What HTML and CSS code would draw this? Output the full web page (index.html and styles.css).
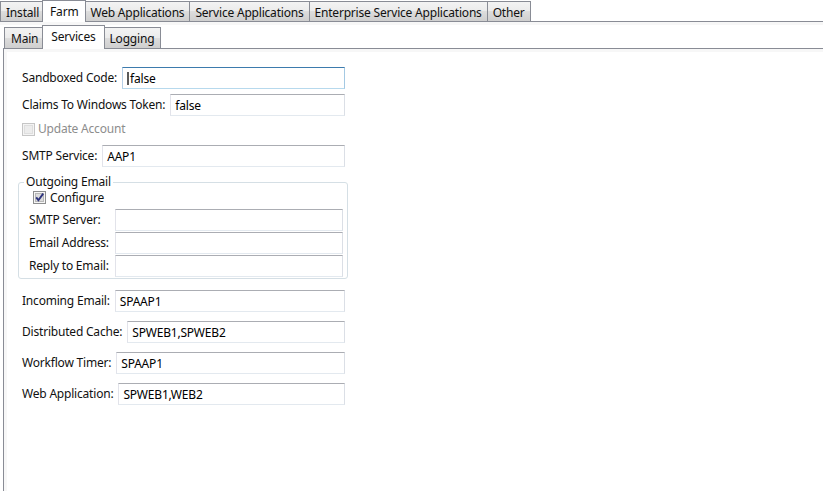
FILE: index.html
```html
<!DOCTYPE html>
<html>
<head>
<meta charset="utf-8">
<link rel="stylesheet" href="styles.css">
</head>
<body>
<div class="app">
  <div class="tabstrip outer-strip">
    <div class="tab first">Install</div>
    <div class="tab sel">Farm</div>
    <div class="tab">Web Applications</div>
    <div class="tab">Service Applications</div>
    <div class="tab">Enterprise Service Applications</div>
    <div class="tab">Other</div>
  </div>
  <div class="outer-panel">
    <div class="tabstrip inner-strip">
      <div class="tab first">Main</div>
      <div class="tab sel">Services</div>
      <div class="tab">Logging</div>
    </div>
    <div class="inner-panel">
      <div class="form">
        <div class="row">
          <span class="lbl">Sandboxed Code:</span>
          <div class="tb focused"><span class="caret"></span>false</div>
        </div>
        <div class="row">
          <span class="lbl">Claims To Windows Token:</span>
          <div class="tb">false</div>
        </div>
        <div class="row check-row disabled">
          <span class="cb">
            <svg width="13" height="13" viewBox="0 0 13 13"><rect x="0.5" y="0.5" width="12" height="12" fill="#f4f4f4" stroke="#c6c6c6"/><rect x="2.5" y="2.5" width="8" height="8" fill="#ececec" stroke="#dedede"/></svg>
          </span>
          <span class="lbl">Update Account</span>
        </div>
        <div class="row">
          <span class="lbl">SMTP Service:</span>
          <div class="tb">AAP1</div>
        </div>
        <fieldset class="group">
          <legend>Outgoing Email</legend>
          <div class="configure">
            <span class="cb">
              <svg width="13" height="13" viewBox="0 0 13 13"><rect x="0.5" y="0.5" width="12" height="12" fill="#f6f6f6" stroke="#8e8f8f"/><rect x="2.5" y="2.5" width="8" height="8" fill="#dcdcdc" stroke="#b8b8b8"/><path d="M3.2 6.4 L5.4 9.2 L10.2 2.6" fill="none" stroke="#2e347e" stroke-width="1.9"/></svg>
            </span>
            <span class="lbl">Configure</span>
          </div>
          <div class="grid">
            <span class="lbl">SMTP Server:</span>
            <div class="tb"></div>
            <span class="lbl">Email Address:</span>
            <div class="tb"></div>
            <span class="lbl">Reply to Email:</span>
            <div class="tb"></div>
          </div>
        </fieldset>
        <div class="row lower first-lower">
          <span class="lbl">Incoming Email:</span>
          <div class="tb">SPAAP1</div>
        </div>
        <div class="row lower">
          <span class="lbl">Distributed Cache:</span>
          <div class="tb">SPWEB1,SPWEB2</div>
        </div>
        <div class="row lower">
          <span class="lbl">Workflow Timer:</span>
          <div class="tb">SPAAP1</div>
        </div>
        <div class="row lower">
          <span class="lbl">Web Application:</span>
          <div class="tb">SPWEB1,WEB2</div>
        </div>
      </div>
    </div>
  </div>
</div>
</body>
</html>
```
FILE: styles.css
```css
* { box-sizing: border-box; }
html, body { margin: 0; padding: 0; }
body {
  font-family: "Noto Sans", "Open Sans", sans-serif;
  font-size: 12px;
  letter-spacing: -0.2px;
  color: #111;
  background: #fff;
  width: 823px;
  height: 491px;
  overflow: hidden;
}
.app {
  height: 491px;
  display: flex;
  flex-direction: column;
}
.tabstrip {
  display: flex;
  align-items: flex-end;
  position: relative;
  z-index: 2;
}
.outer-strip { height: 21px; }
.tab {
  height: 20px;
  border: 1px solid #898c95;
  border-bottom: 0;
  background: linear-gradient(#f3f3f3, #ebebeb 50%, #dddddd 50%, #cfcfcf);
  padding: 1px 5px 0;
  line-height: 19px;
  margin-right: -1px;
  white-space: nowrap;
}
.tab.sel {
  height: 22px;
  background: #fff;
  margin-bottom: -1px;
  margin-left: -2px;
  margin-right: -2px;
  padding: 0 7px;
  line-height: 21px;
  position: relative;
  z-index: 1;
}
.outer-panel {
  flex: 1;
  border-top: 1px solid #898c95;
  box-shadow: inset 0 3px 0 #f7f7f7;
  display: flex;
  flex-direction: column;
}
.inner-strip {
  height: 26px;
  padding-left: 4px;
}
.inner-strip .tab { height: 21px; line-height: 20px; padding: 1px 6px 0; }
.inner-strip .tab.sel { height: 24px; line-height: 21px; padding: 0 8px; }
.inner-panel {
  flex: 1;
  margin-left: 3px;
  border-top: 1px solid #898c95;
  border-left: 1px solid #898c95;
  box-shadow: inset 3px 3px 0 #f7f7f7;
}
.form {
  width: 341px;
  padding: 18px 0 0 18px;
  display: flex;
  flex-direction: column;
}
.row {
  display: flex;
  align-items: center;
  gap: 5px;
  height: 22px;
  margin-top: 5px;
}
.row:first-child { margin-top: 0; }
.lbl {
  white-space: nowrap;
  padding-bottom: 2px;
}
.tb {
  flex: 1;
  height: 22px;
  border: 1px solid;
  border-color: #abadb3 #dbdfe6 #e3e9ef #e2e3ea;
  padding-left: 4px;
  line-height: 19px;
  color: #000;
  white-space: nowrap;
  display: flex;
  align-items: center;
}
.tb.focused {
  border-color: #3d7bad #a4c9e3 #b7d9ed #b5cfe7;
}
.caret {
  display: inline-block;
  width: 2px;
  height: 13px;
  background: #5a5a5a;
  margin-right: 1px;
}
.check-row {
  margin-top: 2px;
  gap: 4px;
}
.check-row .lbl { margin-left: -1px; }
.check-row + .row { margin-top: 5px; }
.cb {
  display: inline-flex;
  width: 13px;
  height: 13px;
}
.disabled .lbl { color: #8d8d8d; }
.group {
  margin: 7px 0 0 -4px;
  width: 330px;
  padding: 0 4px 1px 10px;
  border: 1px solid #d5dfe5;
  border-radius: 3px;
}
.group legend {
  padding: 0 2px;
  margin-left: -5px;
  line-height: 16px;
}
.configure {
  display: flex;
  align-items: center;
  gap: 4px;
  height: 15px;
  margin: 0 0 4px 4px;
}
.configure .lbl { padding-bottom: 1px; }
.grid {
  display: grid;
  grid-template-columns: 86px 1fr;
  grid-auto-rows: 22px;
  row-gap: 1px;
  align-items: center;
}
.grid .tb { width: 100%; }
.lower { margin-top: 9px; }
.first-lower { margin-top: 11px; }
```
